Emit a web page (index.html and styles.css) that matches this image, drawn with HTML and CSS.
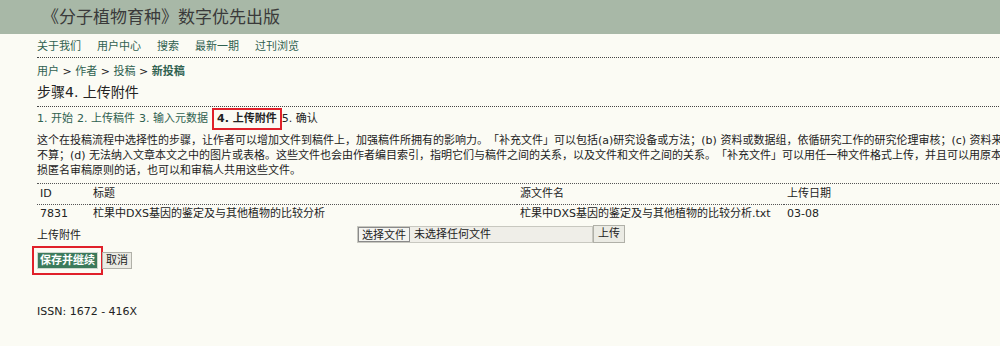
FILE: index.html
```html
<!DOCTYPE html>
<html lang="zh-CN">
<head>
<meta charset="utf-8">
<title>《分子植物育种》数字优先出版</title>
<link rel="stylesheet" href="styles.css">
</head>
<body>
<div class="header"><h1 class="site-title">《分子植物育种》数字优先出版</h1></div>
<div class="page">
  <ul class="nav">
    <li><a href="#">关于我们</a></li>
    <li><a href="#">用户中心</a></li>
    <li><a href="#">搜索</a></li>
    <li><a href="#">最新一期</a></li>
    <li><a href="#">过刊浏览</a></li>
  </ul>
  <div class="breadcrumb"><a href="#">用户</a> &gt; <a href="#">作者</a> &gt; <a href="#">投稿</a> &gt; <a href="#" class="current">新投稿</a></div>
  <h2 class="page-heading">步骤<span class="num">4.</span> 上传附件</h2>
  <div class="steps">
    <a href="#">1. 开始</a> <a href="#">2. 上传稿件</a> <a href="#">3. 输入元数据</a> <span class="step-current">4. 上传附件</span><span class="step-next">5. 确认</span>
  </div>
  <p class="intro">这个在投稿流程中选择性的步骤，让作者可以增加文件到稿件上，加强稿件所拥有的影响力。「补充文件」可以包括(a)研究设备或方法；(b) 资料或数据组，依循研究工作的研究伦理审核；(c) 资料来源：无法在期刊中找到或以其他方式取得的资料，若未引用则<br>不算；(d) 无法纳入文章本文之中的图片或表格。这些文件也会由作者编目索引，指明它们与稿件之间的关系，以及文件和文件之间的关系。「补充文件」可以用任一种文件格式上传，并且可以用原本的格式让读者查看。如果不会有<br>损匿名审稿原则的话，也可以和审稿人共用这些文件。</p>
  <table class="files">
    <thead>
      <tr><th class="c-id">ID</th><th class="c-title">标题</th><th class="c-file">源文件名</th><th class="c-date">上传日期</th></tr>
    </thead>
    <tbody>
      <tr><td>7831</td><td>杧果中DXS基因的鉴定及与其他植物的比较分析</td><td>杧果中DXS基因的鉴定及与其他植物的比较分析.txt</td><td>03-08</td></tr>
    </tbody>
  </table>
  <div class="upload-row">
    <span class="upload-label">上传附件</span>
    <span class="file-input"><span class="file-btn">选择文件</span><span class="file-name">未选择任何文件</span></span>
    <button class="btn" type="button">上传</button>
  </div>
  <div class="actions">
    <span class="highlight"><button class="btn btn-primary" type="button">保存并继续</button></span>
    <button class="btn" type="button">取消</button>
  </div>
  <div class="footer">ISSN: 1672 - 416X</div>
</div>
</body>
</html>
```
FILE: styles.css
```css
html, body {
  margin: 0;
  padding: 0;
  overflow: hidden;
}
body {
  background: #fbfbf4;
  color: #222;
  font-family: "DejaVu Sans", "Noto Sans CJK SC", sans-serif;
  font-size: 11px;
  width: 1000px;
  height: 346px;
  text-spacing-trim: space-all;
}
a {
  color: #2f6150;
  text-decoration: none;
}
.header {
  background: #a8b8a7;
  height: 34px;
}
.site-title {
  margin: 0;
  padding-left: 42px;
  font-family: "Liberation Serif", "Noto Sans CJK SC", serif;
  font-weight: normal;
  font-size: 17px;
  line-height: 36px;
  color: #3a3a3a;
}
.page {
  margin-left: 37px;
  width: 1200px;
}
.nav {
  list-style: none;
  margin: 0;
  padding: 6px 0 4px;
  display: flex;
  gap: 16px;
  border-bottom: 1px dotted #444;
  font-size: 11px;
  line-height: 13px;
}
.nav a {
  color: #2f6150;
}
.breadcrumb {
  margin-top: 7px;
  line-height: 14px;
}
.breadcrumb .current {
  font-weight: bold;
}
.page-heading {
  margin: 3px 0 0;
  font-size: 14px;
  font-weight: normal;
  line-height: 20px;
  padding-bottom: 4px;
  border-bottom: 1px dotted #444;
  color: #222;
}
.page-heading .num {
  font-family: "DejaVu Sans", sans-serif;
  font-size: 14px;
}
.steps {
  margin-top: 1px;
  line-height: 16px;
  display: flex;
  align-items: center;
  gap: 4px;
}
.step-current {
  font-weight: bold;
  border: 2px solid #e0202a;
  padding: 1px 3px;
}
.step-next {
  margin-left: -4px;
}
.intro {
  margin: 3px 0 0;
  line-height: 15px;
  white-space: nowrap;
  padding-bottom: 5px;
  border-bottom: 1px dotted #555;
}
.files {
  border-collapse: collapse;
  width: 1100px;
  margin-top: 1px;
}
.files th, .files td {
  text-align: left;
  font-weight: normal;
  padding: 1px 3px;
  line-height: 15px;
}
.files thead tr {
  border-bottom: 1px dotted #555;
}
.files thead th {
  padding-bottom: 3px;
  padding-top: 1px;
}
.files tbody td {
  padding-top: 1px;
}
.c-id { width: 47px; }
.c-title { width: 421px; }
.c-file { width: 261px; }
.upload-row {
  display: flex;
  align-items: center;
  margin-top: 3px;
  height: 18px;
}
.upload-label {
  width: 320px;
}
.file-input {
  display: inline-flex;
  align-items: stretch;
  width: 236px;
  height: 17px;
  background: #efeee8;
  border: 1px solid #c8c8c0;
  box-sizing: border-box;
  line-height: 15px;
}
.file-btn {
  background: #f4f4f0;
  border: 1px solid #8a8a8a;
  padding: 0 3px;
}
.file-name {
  padding-left: 4px;
}
.btn {
  font-family: inherit;
  font-size: 11px;
  line-height: 14px;
  padding: 0 3px;
  background: #ebebe4;
  border: 1px solid #b0b0a8;
  color: #222;
  margin: 0;
}
.upload-row .btn {
  margin-left: 0;
  height: 18px;
  padding: 0 4px;
}
.actions {
  display: flex;
  align-items: center;
  margin-top: 3px;
  margin-left: -5px;
  gap: 1px;
}
.highlight {
  display: inline-flex;
  border: 2px solid #e0202a;
  padding: 4px 3px 4px 3px;
}
.btn-primary {
  background: #3c7a5b;
  color: #fff;
  font-weight: bold;
  border: 1px solid #cfd8cf;
  height: 17px;
  padding: 0 2px;
}
.actions > .btn {
  height: 17px;
  margin-left: -2px;
}
.footer {
  margin-top: 30px;
  line-height: 14px;
}
```
